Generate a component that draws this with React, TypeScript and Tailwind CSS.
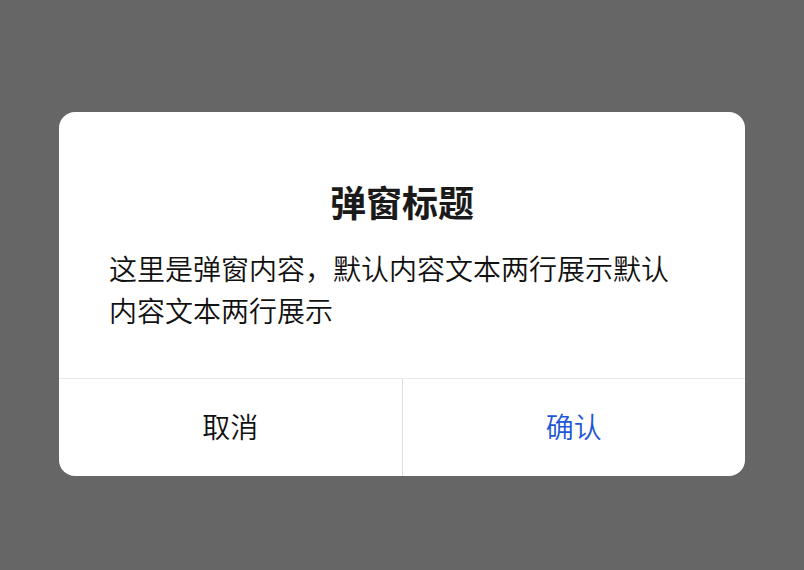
export default function App() {
  return (
    <div
      className="min-h-[570px] w-full bg-[#666666] flex justify-center items-start pt-[112px]"
      style={{ fontFamily: '"Noto Sans CJK SC", "Noto Sans", sans-serif' }}
    >
      <div className="w-[686px] bg-white rounded-[16px] overflow-hidden flex flex-col">
        <div className="pt-[65px] pb-[47px] px-[50px] flex flex-col">
          <div className="text-center text-[36px] leading-[48px] font-bold text-[#1a1a1a]">弹窗标题</div>
          <div className="mt-[22px] text-[28px] leading-[42px] font-[350] text-[#111111]">
            这里是弹窗内容，默认内容文本两行展示默认内容文本两行展示
          </div>
        </div>
        <div className="flex border-t border-[#e8e8e8] h-[98px]">
          <button className="flex-1 flex items-center justify-center pb-[3px] text-[28px] font-[350] text-[#111111] border-r border-[#e0e0e0]">
            取消
          </button>
          <button className="flex-1 flex items-center justify-center pb-[3px] text-[28px] font-[350] text-[#1f57d6]">
            确认
          </button>
        </div>
      </div>
    </div>
  );
}
